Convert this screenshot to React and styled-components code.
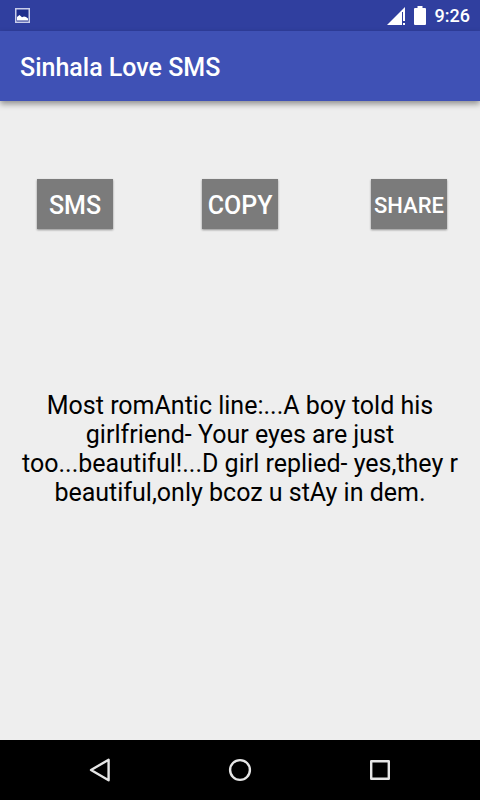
import React from "react";
import styled, { createGlobalStyle } from "styled-components";

const message =
  "Most romAntic line:...A boy told his girlfriend- Your eyes are just too...beautiful!...D girl replied- yes,they r beautiful,only bcoz u stAy in dem.";

const App = () => {
  return (
    <>
      <GlobalStyle />
      <Screen>
        <StatusBar>
          <svg width="15" height="15" viewBox="0 0 15 15" aria-hidden="true">
            <rect x="0.75" y="0.75" width="13.5" height="13.5" fill="#1f2d8c" stroke="#c9cdea" strokeWidth="1.5" />
            <path d="M2 12.5V9L4.5 7L7 9.2L9 8.5L11 9L13 10.5V12.5Z" fill="#fff" />
          </svg>
          <StatusIcons>
            <svg width="18" height="18" viewBox="0 0 18 18" aria-hidden="true">
              <path d="M0 18L18 0V5H15V18Z" fill="#fff" />
              <path d="M16 5H18V14H16ZM16 16H18V18H16Z" fill="#fff" />
            </svg>
            <svg width="12" height="19" viewBox="0 0 12 19" aria-hidden="true">
              <path d="M3.5 0H8.5V2H11Q12 2 12 3V18Q12 19 11 19H1Q0 19 0 18V3Q0 2 1 2H3.5Z" fill="#fff" />
            </svg>
            <Clock>9:26</Clock>
          </StatusIcons>
        </StatusBar>

        <AppBar>
          <Title>Sinhala Love SMS</Title>
        </AppBar>

        <Content>
          <Actions>
            <ActionButton type="button">SMS</ActionButton>
            <ActionButton type="button">COPY</ActionButton>
            <ActionButton type="button" $small>
              SHARE
            </ActionButton>
          </Actions>
          <Message>{message}</Message>
        </Content>

        <NavBar>
          <NavButton type="button" aria-label="Back">
            <svg width="24" height="24" viewBox="0 0 24 24">
              <path d="M20.6 1.8V22.2L3 12Z" />
            </svg>
          </NavButton>
          <NavButton type="button" aria-label="Home">
            <svg width="24" height="24" viewBox="0 0 24 24">
              <circle cx="12" cy="12" r="9.9" />
            </svg>
          </NavButton>
          <NavButton type="button" aria-label="Recent apps">
            <svg width="24" height="24" viewBox="0 0 24 24">
              <rect x="3.2" y="3.2" width="17.6" height="17.6" />
            </svg>
          </NavButton>
        </NavBar>
      </Screen>
    </>
  );
};

export default App;

const GlobalStyle = createGlobalStyle`
  * {
    box-sizing: border-box;
  }

  body {
    margin: 0;
    font-family: Roboto, "Liberation Sans", sans-serif;
    background: #eeeeee;
  }
`;

const Screen = styled.div`
  display: flex;
  flex-direction: column;
  min-height: 100vh;
`;

const StatusBar = styled.div`
  display: flex;
  align-items: center;
  justify-content: space-between;
  height: 31px;
  padding: 0 10px 0 15px;
  background: #303f9f;
  color: #fff;
`;

const StatusIcons = styled.div`
  display: flex;
  align-items: center;
  gap: 9px;
`;

const Clock = styled.span`
  font-size: 18px;
  font-weight: 500;
  line-height: 20px;
`;

const AppBar = styled.header`
  display: flex;
  align-items: center;
  height: 70px;
  padding: 4px 20px 0;
  background: #3f51b5;
  box-shadow: 0 3px 6px rgba(0, 0, 0, 0.4);
`;

const Title = styled.h1`
  margin: 0;
  color: #fff;
  font-size: 25px;
  font-weight: 500;
  line-height: 30px;
`;

const Content = styled.main`
  flex: 1;
  padding-top: 78px;
`;

/* the gap after COPY is a little wider than the one before it */
const Actions = styled.div`
  display: grid;
  grid-template-columns: 45fr 46fr auto;
  padding: 0 33px 0 37px;
`;

const ActionButton = styled.button`
  display: flex;
  align-items: center;
  justify-content: center;
  width: 76px;
  height: 50px;
  padding: 2px 0 0;
  border: none;
  background: #7b7b7b;
  color: #fff;
  font-family: inherit;
  font-size: ${(props) => (props.$small ? "22px" : "25px")};
  font-weight: 500;
  box-shadow: 0 1px 2px rgba(0, 0, 0, 0.4);
  cursor: pointer;
`;

const Message = styled.p`
  margin: 162px 16px 0;
  color: #000;
  font-size: 25px;
  line-height: 29px;
  text-align: center;
`;

const NavBar = styled.nav`
  display: flex;
  justify-content: center;
  gap: 68px;
  height: 60px;
  background: #000;
`;

const NavButton = styled.button`
  display: flex;
  align-items: center;
  justify-content: center;
  width: 72px;
  padding: 0;
  border: none;
  background: none;
  cursor: pointer;

  svg {
    fill: none;
    stroke: #e6e6e6;
    stroke-width: 2.4;
    stroke-linejoin: round;
  }
`;
